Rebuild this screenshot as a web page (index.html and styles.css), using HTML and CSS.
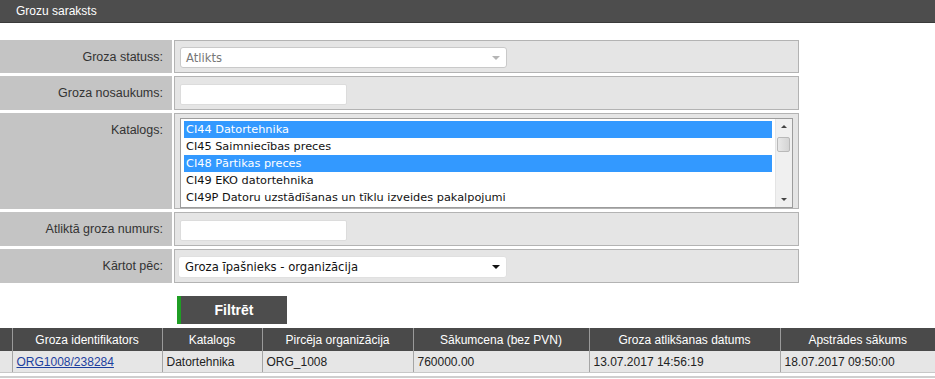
FILE: index.html
```html
<!DOCTYPE html>
<html lang="lv">
<head>
    <meta charset="UTF-8">
    <meta name="viewport" content="width=device-width, initial-scale=1.0">
    <title>Grozu saraksts</title>
    <link rel="stylesheet" href="styles.css">
</head>
<body>
    <header class="title-bar">Grozu saraksts</header>
    <main>
        <div class="filter">
            <div class="lbl">Groza statuss:</div>
            <div class="val">
                <div class="select status"><span>Atlikts</span><span class="arrow"></span></div>
            </div>

            <div class="lbl">Groza nosaukums:</div>
            <div class="val"><div class="textbox"></div></div>

            <div class="lbl">Katalogs:</div>
            <div class="val">
                <div class="listbox">
                    <div class="items">
                        <div class="item sel">CI44 Datortehnika</div>
                        <div class="item">CI45 Saimniecības preces</div>
                        <div class="item sel">CI48 Pārtikas preces</div>
                        <div class="item">CI49 EKO datortehnika</div>
                        <div class="item">CI49P Datoru uzstādīšanas un tīklu izveides pakalpojumi</div>
                    </div>
                    <div class="scroll">
                        <span class="up"></span>
                        <span class="thumb"></span>
                        <span class="down"></span>
                    </div>
                </div>
            </div>

            <div class="lbl">Atliktā groza numurs:</div>
            <div class="val"><div class="textbox"></div></div>

            <div class="lbl">Kārtot pēc:</div>
            <div class="val">
                <div class="select sort"><span>Groza īpašnieks - organizācija</span><span class="arrow"></span></div>
            </div>
        </div>

        <div class="actions">
            <button class="btn" type="button">Filtrēt</button>
        </div>

        <table class="results">
            <colgroup>
                <col style="width: 12px">
                <col style="width: 150px">
                <col style="width: 100px">
                <col style="width: 151px">
                <col style="width: 176px">
                <col style="width: 191px">
                <col style="width: 155px">
            </colgroup>
            <thead>
                <tr>
                    <th></th>
                    <th>Groza identifikators</th>
                    <th>Katalogs</th>
                    <th>Pircēja organizācija</th>
                    <th>Sākumcena (bez PVN)</th>
                    <th>Groza atlikšanas datums</th>
                    <th>Apstrādes sākums</th>
                </tr>
            </thead>
            <tbody>
                <tr>
                    <td></td>
                    <td><a href="#">ORG1008/238284</a></td>
                    <td>Datortehnika</td>
                    <td>ORG_1008</td>
                    <td>760000.00</td>
                    <td>13.07.2017 14:56:19</td>
                    <td>18.07.2017 09:50:00</td>
                </tr>
            </tbody>
        </table>
        <div class="bottom-line"></div>
    </main>
</body>
</html>
```

FILE: styles.css
```css
body {
    margin: 0;
    background-color: #fff;
    font-family: "Liberation Sans", Arial, sans-serif;
    font-size: 12px;
    color: #333;
}
.title-bar {
    height: 22px;
    line-height: 22px;
    padding-left: 16px;
    background-color: #4d4d4d;
    border-bottom: 1px solid #3a3a3a;
    color: #fff;
    font-size: 12px;
}
.filter {
    display: grid;
    grid-template-columns: 172px 625px;
    grid-template-rows: 33px 34px 96px 34px 34px;
    column-gap: 2px;
    row-gap: 3px;
    margin-top: 17px;
    width: 799px;
}
.lbl {
    background-color: #c4c4c4;
    text-align: right;
    padding: 10px 9px 0 0;
    line-height: 14px;
    font-size: 12.5px;
    color: #333;
}
.val {
    background-color: #e5e5e5;
    border: 1px solid #b3b3b3;
    padding: 6px 4px 0 5px;
}
.select {
    display: flex;
    align-items: center;
    justify-content: space-between;
    box-sizing: border-box;
    width: 327px;
    height: 21px;
    padding: 0 6px 0 5px;
    background-color: #fff;
    border-radius: 3px;
    font-family: "DejaVu Sans", Tahoma, sans-serif;
    font-size: 11.6px;
}
.select.status {
    border: 1px solid #c9c9c9;
    color: #777;
}
.select.sort {
    height: 22px;
    width: 329px;
    margin-left: -2px;
    padding-left: 6px;
    border: 1px solid #e0e0e0;
    color: #111;
}
.arrow {
    width: 0;
    height: 0;
    border-left: 4px solid transparent;
    border-right: 4px solid transparent;
    border-top: 4px solid #111;
}
.status .arrow {
    border-top-color: #b5b5b5;
}
.textbox {
    width: 167px;
    height: 21px;
    margin-top: 1px;
    background-color: #fff;
    border: 1px solid #dcdcdc;
    border-radius: 2px;
    box-sizing: border-box;
}
.listbox {
    display: flex;
    width: 613px;
    height: 90px;
    margin-top: -2px;
    background-color: #fff;
    border: 1px solid #9c9c9c;
    box-sizing: border-box;
    font-family: "DejaVu Sans", Tahoma, sans-serif;
    font-size: 11.3px;
    color: #111;
}
.items {
    flex: 1;
    padding: 2px 3px 0 3px;
}
.item {
    height: 17px;
    line-height: 17px;
    padding-left: 2px;
    white-space: nowrap;
}
.item.sel {
    background-color: #3399ff;
    color: #fff;
}
.scroll {
    position: relative;
    width: 16px;
    background-color: #f0f0f0;
    border-left: 1px solid #e4e4e4;
}
.scroll .up, .scroll .down {
    position: absolute;
    left: 5px;
    width: 0;
    height: 0;
    border-left: 3px solid transparent;
    border-right: 3px solid transparent;
}
.scroll .up {
    top: 6px;
    border-bottom: 3px solid #444;
}
.scroll .down {
    bottom: 6px;
    border-top: 3px solid #444;
}
.scroll .thumb {
    position: absolute;
    top: 18px;
    left: 1px;
    width: 13px;
    height: 15px;
    background: linear-gradient(to right, #e8e8e8, #d4d4d4);
    border: 1px solid #b9b9b9;
    border-radius: 2px;
    box-sizing: border-box;
}
.actions {
    padding: 13px 0 0 177px;
    height: 32px;
}
.btn {
    width: 110px;
    height: 28px;
    border: 0;
    border-left: 4px solid #1f9e24;
    background-color: #4d4d4d;
    color: #fff;
    font-family: "Liberation Sans", Arial, sans-serif;
    font-size: 14px;
    font-weight: bold;
    padding: 0;
}
.results {
    width: 935px;
    border-collapse: collapse;
    table-layout: fixed;
}
.results th {
    height: 23px;
    padding: 0;
    background-color: #4a4a4a;
    color: #fff;
    font-weight: normal;
    font-size: 12px;
    text-align: center;
    border-left: 1px solid #9a9a9a;
}
.results th:first-child, .results td:first-child {
    border-left: 0;
}
.results td {
    height: 21px;
    padding: 0 0 0 4px;
    background-color: #e6e6e6;
    color: #222;
    font-size: 12px;
    border-left: 1px solid #a5a5a5;
    border-bottom: 1px solid #c8c8c8;
    white-space: nowrap;
}
.results a {
    color: #1d3f9e;
}
.bottom-line {
    margin-top: 3px;
    height: 2px;
    background-color: #cfcfcf;
}
```
